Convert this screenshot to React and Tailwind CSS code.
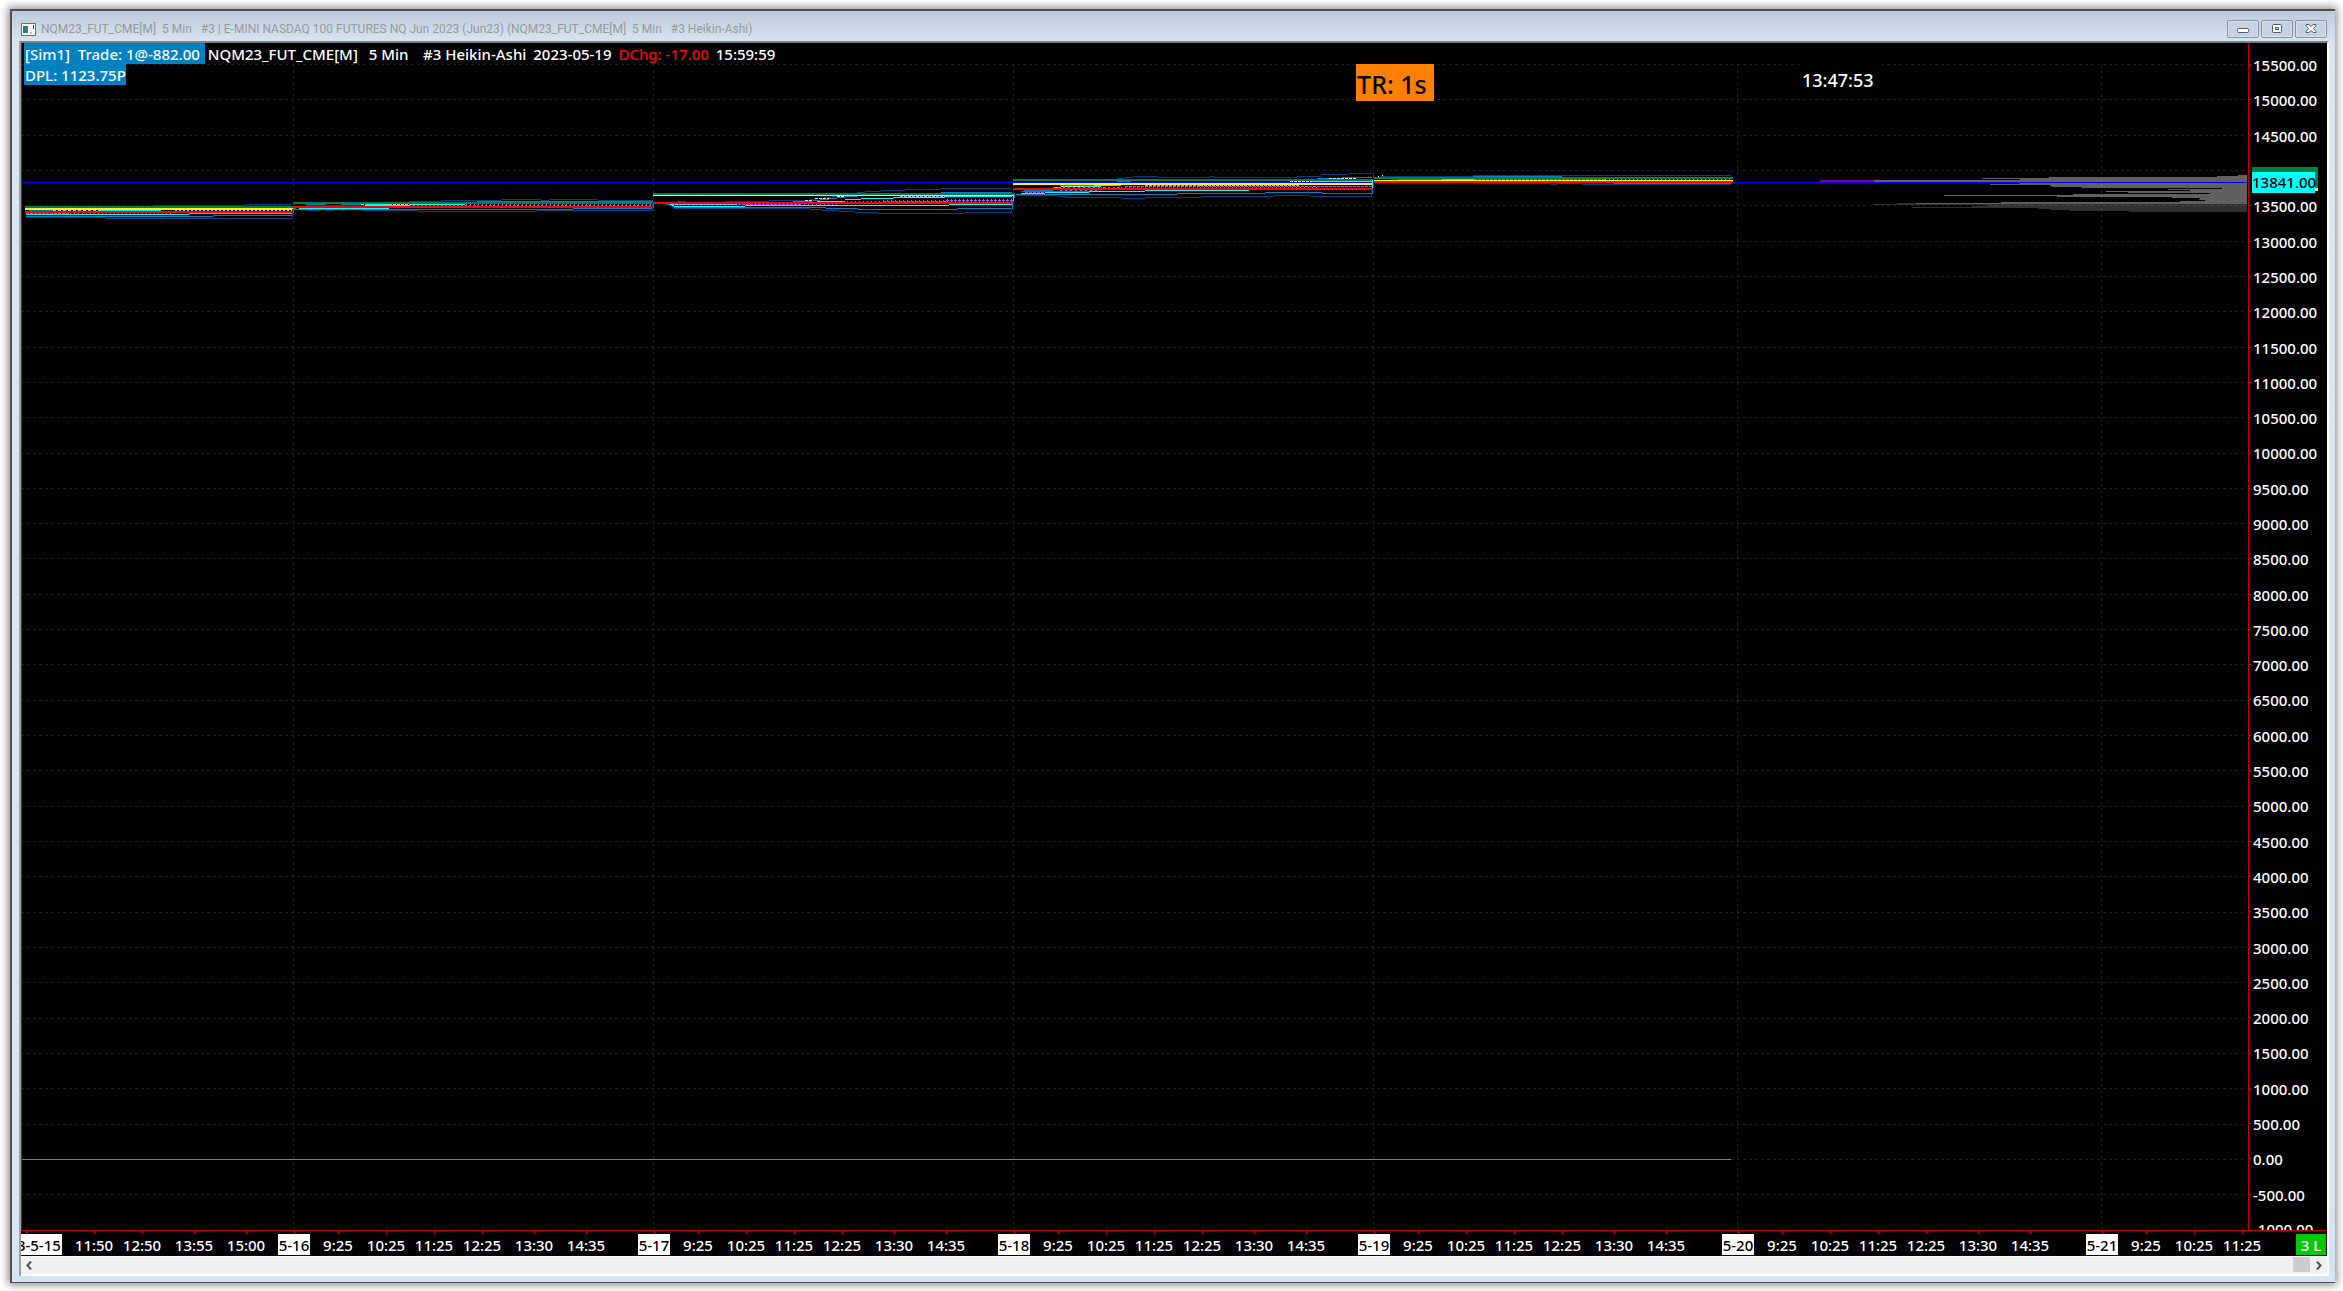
import { useState } from "react";

const GREEN = "#008040";
const YELLOW = "#ffff00";
const RED = "#ff0000";
const NAVY = "#004080";
const BLUE = "#0080c0";
const CYAN = "#00ffff";
const VIOLET = "#a050ff";

// plot area in chart units
const LEFT = 21;
const TOP = 43;
const RIGHT = 2248;
const BOTTOM = 1230;

const prices = [];
for (let p = 15500; p >= -500; p -= 500) prices.push(p);

const days = [293, 653, 1013, 1373, 1737, 2101];

const ticks = [
  [26, "2023-5-15", true], [94, "11:50"], [142, "12:50"], [194, "13:55"], [246, "15:00"],
  [294, "5-16", true], [338, "9:25"], [386, "10:25"], [434, "11:25"], [482, "12:25"], [534, "13:30"], [586, "14:35"],
  [654, "5-17", true], [698, "9:25"], [746, "10:25"], [794, "11:25"], [842, "12:25"], [894, "13:30"], [946, "14:35"],
  [1014, "5-18", true], [1058, "9:25"], [1106, "10:25"], [1154, "11:25"], [1202, "12:25"], [1254, "13:30"], [1306, "14:35"],
  [1374, "5-19", true], [1418, "9:25"], [1466, "10:25"], [1514, "11:25"], [1562, "12:25"], [1614, "13:30"], [1666, "14:35"],
  [1738, "5-20", true], [1782, "9:25"], [1830, "10:25"], [1878, "11:25"], [1926, "12:25"], [1978, "13:30"], [2030, "14:35"],
  [2102, "5-21", true], [2146, "9:25"], [2194, "10:25"], [2242, "11:25"],
];

// stepped one pixel lines: [color, x0, y, x1, y, x2, ...]
const steps = [
  // 5-15
  [NAVY, 153, 205, 245, 204, 292],
  [BLUE, 29, 210, 53],
  [CYAN, 101, 210, 161],
  [CYAN, 26, 214, 189, 213, 292],
  [BLUE, 26, 216, 213, 215, 292],
  [NAVY, 26, 217, 106, 218, 292],
  // 5-16
  [NAVY, 409, 201, 441, 200, 501, 199, 541, 200, 549, 199, 598, 200, 652],
  [BLUE, 477, 201, 652],
  [BLUE, 306, 204, 326],
  [BLUE, 341, 204, 361],
  [NAVY, 306, 205, 365],
  [CYAN, 365, 204, 389],
  [CYAN, 365, 205, 409, 204, 465],
  [CYAN, 299, 208, 389],
  [BLUE, 296, 209, 573, 208, 652],
  [NAVY, 306, 210, 320],
  [NAVY, 326, 210, 333],
  [NAVY, 342, 210, 345],
  [NAVY, 362, 210, 418, 211, 537, 210, 652],
  // 5-17
  [NAVY, 677, 201, 686],
  [NAVY, 725, 201, 769, 200, 810, 199, 817, 198, 824, 197, 832, 196, 845],
  [NAVY, 857, 192, 865, 191, 881, 190, 905, 189, 941, 188, 1012],
  [BLUE, 941, 192, 1012],
  [BLUE, 793, 201, 813, 200, 820, 199, 829, 198, 837, 197, 845, 196, 857],
  [CYAN, 817, 201, 829, 201, 845, 199, 861, 198, 893, 197, 945, 196, 1012],
  [CYAN, 667, 204, 737],
  [CYAN, 671, 205, 674, 206, 745, 205, 949, 204, 1013],
  [BLUE, 660, 203, 666, 204, 670, 205, 672, 206, 674, 207, 826, 208, 858, 209, 957, 208, 1012],
  [NAVY, 674, 208, 810, 209, 822, 210, 838, 211, 854, 212, 878, 213, 965, 212, 1011],
  // 5-18
  [NAVY, 1117, 178, 1125, 177, 1133, 176, 1158, 177, 1209, 176, 1214, 177, 1297, 176, 1321, 174, 1349, 173, 1372],
  [BLUE, 1317, 178, 1342, 177, 1372],
  [BLUE, 1117, 181, 1131],
  [CYAN, 1312, 181, 1373],
  [BLUE, 1060, 185, 1094],
  [CYAN, 1094, 185, 1121],
  [CYAN, 1061, 186, 1101],
  [BLUE, 1024, 190, 1053],
  [CYAN, 1053, 187, 1061],
  [BLUE, 1021, 191, 1089],
  [CYAN, 1021, 193, 1045, 192, 1089, 191, 1145, 190, 1249],
  [BLUE, 1016, 194, 1177, 193, 1265, 192, 1322, 193, 1372],
  [NAVY, 1018, 195, 1058, 196, 1066, 197, 1122, 198, 1145, 197, 1201, 196, 1273, 195, 1310, 196, 1372],
  // 5-19
  [NAVY, 1381, 176, 1473, 175, 1731],
  [BLUE, 1473, 176, 1562],
  [NAVY, 1390, 179, 1418],
  [BLUE, 1398, 179, 1442],
  [CYAN, 1442, 179, 1474],
  [NAVY, 1478, 183, 1550, 184, 1557, 183, 1582, 184, 1731],
  [BLUE, 1614, 183, 1731],
];

// [color, x, y, x2, dash]
const dotted = [
  ["#c0c0c0", 53, 210, 101, "3 2"],
  ["#d0a0ff", 175, 210, 293, "2 2"],
  [VIOLET, 26, 213, 70, "3 1"],
  [VIOLET, 70, 213, 173, "1 3"],
  ["#c0c0c0", 361, 204, 364, "3 0"],
  ["#c0c0c0", 389, 204, 409, "3 1"],
  [VIOLET, 409, 205, 653, "2 2"],
  ["#8080ff", 466, 204, 653, "1 3"],
  ["#e0e0e0", 805, 200, 813, "3 1"],
  ["#e0e0e0", 815, 198, 829, "3 1"],
  ["#e0e0e0", 837, 196, 845, "3 1"],
  ["#80a0ff", 900, 196, 945, "3 1"],
  [VIOLET, 674, 204, 738, "1 3"],
  [VIOLET, 738, 204, 800, "3 1"],
  [VIOLET, 800, 204, 840, "1 3"],
  [VIOLET, 843, 201, 883, "1 3"],
  [VIOLET, 883, 201, 946, "3 1"],
  [VIOLET, 883, 200, 946, "1 3"],
  [VIOLET, 946, 200, 1013, "3 1"],
  [VIOLET, 947, 199, 1013, "1 3"],
  [VIOLET, 947, 201, 1013, "1 3"],
  [VIOLET, 1025, 192, 1045, "3 1"],
  ["#e0e0e0", 1061, 186, 1085, "3 1"],
  [VIOLET, 1053, 187, 1120, "2 3"],
  ["#a0a0ff", 1145, 185, 1200, "3 1"],
  ["#80c0ff", 1200, 185, 1300, "3 1"],
  [VIOLET, 1101, 187, 1200, "1 3"],
  [VIOLET, 1125, 186, 1373, "3 1"],
  [VIOLET, 1200, 187, 1320, "1 3"],
  [VIOLET, 1060, 190, 1100, "2 3"],
  ["#e0e0e0", 1290, 181, 1312, "3 1"],
  ["#e0e0e0", 1329, 178, 1357, "3 1"],
  [VIOLET, 1474, 179, 1605, "3 1"],
  ["#a0a0a0", 1605, 179, 1733, "1 3"],
  ["#e0e0e0", 1378, 176, 1380, "1 1"],
  ["#e0e0e0", 1382, 175, 1383, "1 1"],
];

// thick levels: [color, x, y, width, height]
const levels = [
  [GREEN, 25, 206, 268, 2], [YELLOW, 25, 208, 268, 2], [RED, 25, 211, 268, 2],
  [GREEN, 293, 202, 360, 2], [RED, 293, 206, 360, 2],
  [GREEN, 653, 193, 360, 2], [YELLOW, 653, 195, 360, 1], [RED, 653, 202, 360, 2],
  [GREEN, 1013, 179, 360, 2], [YELLOW, 1013, 183, 360, 2], [RED, 1013, 188, 360, 2],
  [GREEN, 1373, 177, 360, 2], [YELLOW, 1373, 180, 360, 1], [RED, 1373, 181, 360, 2],
];

// moves between sessions
const jumps = [
  [NAVY, 292, 209, 1, 9], [BLUE, 293, 208, 1, 5], [BLUE, 294, 208, 2, 2],
  [NAVY, 652, 200, 1, 11], [BLUE, 653, 204, 1, 4],
  [NAVY, 1011, 208, 1, 5], [BLUE, 1012, 200, 1, 9], [CYAN, 1013, 194, 1, 7], [BLUE, 1014, 193, 1, 5],
  [NAVY, 1371, 190, 1, 7], [BLUE, 1372, 184, 1, 10], [CYAN, 1372, 180, 1, 8], [NAVY, 1373, 174, 1, 11],
];

// volume profile rows, starting at y 175
const profile = [
  2238, 2217, 2049, 1983, 2020, 1874, 1874, 2020, 2020, 1990, 2050, 2052, 2082, 2222, 2168, 2190, 2106,
  2128, 2210, 2073, 1944, 2057, 2172, 2200, 2199, 2205, 2180, 2001, 1916,
];
const profileLow = [1873, 1987, 1972, 1912, 2038, 2050, 2070, 2129];

function Steps({ line }) {
  const [color, ...pts] = line;
  const out = [];
  for (let i = 0; i + 2 < pts.length; i += 2) {
    out.push(<rect key={i} x={pts[i]} y={pts[i + 1]} width={pts[i + 2] - pts[i]} height="1" fill={color} />);
  }
  return <g>{out}</g>;
}

function Bar({ bar }) {
  const [color, x, y, w, h] = bar;
  return <rect x={x} y={y} width={w} height={h} fill={color} />;
}

function Plot() {
  return (
    <svg
      className="absolute inset-0 w-full h-full"
      viewBox={`${LEFT} ${TOP} ${RIGHT - LEFT} ${BOTTOM - TOP}`}
      preserveAspectRatio="none"
      shapeRendering="crispEdges"
    >
      {profile.map((x, i) => (
        <rect key={i} x={x} y={175 + i} width={2247 - x} height="1" fill="#606060" />
      ))}
      <rect x="1897" y="203" width="19" height="1" fill="#303030" />
      {profileLow.map((x, i) => (
        <rect key={i} x={x} y={204 + i} width={2247 - x} height="1" fill="#303030" />
      ))}

      <g stroke="#ffffff" strokeOpacity="0.11" strokeDasharray="3 3">
        {prices.map((p, i) => {
          const y = Math.round(64 + i * 35.32) + 0.5;
          return <line key={p} x1={LEFT} x2="2247" y1={y} y2={y} />;
        })}
        {days.map(x => <line key={x} x1={x + 0.5} x2={x + 0.5} y1="64" y2={BOTTOM} />)}
      </g>

      <rect x={LEFT} y="1159" width="1710" height="1" fill="#808080" />
      <rect x="1820" y="180" width="54" height="2" fill="#800080" />
      <rect x={LEFT} y="182" width={RIGHT - LEFT} height="1" fill="#0000ff" />

      {steps.map((l, i) => <Steps key={i} line={l} />)}
      {dotted.map(([color, x, y, x2, dash], i) => (
        <line key={i} x1={x} x2={x2} y1={y + 0.5} y2={y + 0.5} stroke={color} strokeDasharray={dash} />
      ))}
      {levels.map((b, i) => <Bar key={i} bar={b} />)}
      {jumps.map((b, i) => <Bar key={i} bar={b} />)}
      <rect x={LEFT} y={TOP} width="1" height={BOTTOM - TOP} fill="#c00000" />
    </svg>
  );
}

function PriceAxis() {
  return (
    <div className="relative w-[79px] shrink-0 flex flex-col pt-[5px] border-l border-[#c00000] overflow-hidden">
      {prices.map(p => (
        <div key={p} className="flex-1 min-h-0 flex items-center">
          <span className="w-[2px] h-px mb-[2px] mr-[2px] bg-[#c00000]" />
          <span className="leading-none">{p.toFixed(2)}</span>
        </div>
      ))}
      <div className="h-[17px] pl-1 pt-[9px] leading-none">-1000.00</div>

      <div className="absolute left-[3px] top-[124px] w-[66px] h-[24px] bg-[#008040] border-b-3 border-[#ffff00]" />
      <div className="absolute left-[3px] top-[128px] w-[63px] h-[22px] border-t border-[#ff0000] bg-[#00ffff] text-black leading-[21px]">
        13841.00
      </div>
    </div>
  );
}

function TimeAxis() {
  return (
    <div className="flex h-[26px] border-t border-[#c00000] overflow-hidden">
      <div className="flex-1 flex min-w-0">
        <div className="basis-0" style={{ flexGrow: ticks[0][0] - LEFT }} />
        {ticks.map(([x, label, isDay], i) => {
          const next = i + 1 < ticks.length ? ticks[i + 1][0] : RIGHT;
          return (
            <div key={x} className="basis-0 min-w-0" style={{ flexGrow: next - x }}>
              <div className="w-px h-[3px] bg-[#c00000]" />
              <div className="w-0 flex justify-center">
                <span className={isDay
                  ? "shrink-0 px-px pt-[2px] whitespace-nowrap leading-[19px] bg-white text-black"
                  : "shrink-0 pt-[2px] whitespace-nowrap leading-[19px]"}>
                  {label}
                </span>
              </div>
            </div>
          );
        })}
      </div>
      <div className="w-[79px] shrink-0 flex justify-end pt-[3px] pr-px">
        <span className="w-[30px] h-[21px] pt-[2px] text-center leading-[19px] bg-[#00c800]">3 L</span>
      </div>
    </div>
  );
}

function CaptionButton({ label, children }) {
  return (
    <button
      aria-label={label}
      className="w-8 h-[18px] flex items-center justify-center rounded-xs border border-[#8492ae] bg-[#c5d2e0] shadow-[inset_0_0_0_1px_#d6e0ea]"
    >
      <svg width="12" height="10" viewBox="0 0 12 10">{children}</svg>
    </button>
  );
}

function TitleBar() {
  return (
    <div className="h-[30px] flex items-center pt-[6px] pl-[9px] pr-2 bg-linear-to-b from-[#bccad9] to-[#d7e4f2]">
      <svg width="15" height="13" viewBox="0 0 15 13" className="shrink-0" shapeRendering="crispEdges">
        <rect x="0.5" y="0.5" width="14" height="12" fill="#fff" stroke="#707070" />
        <rect x="2" y="3" width="5" height="7" fill="#2f8f6a" />
        <rect x="2" y="3" width="2" height="7" fill="#3a6a9a" />
        <rect x="9" y="9" width="2" height="2" fill="#c0c0c0" />
        <rect x="12" y="2" width="1" height="4" fill="#404060" />
      </svg>
      <span className="ml-[5px] flex-1 whitespace-pre font-['Roboto','Noto_Sans',sans-serif] text-[12px] text-[#999]">
        {"NQM23_FUT_CME[M]  5 Min   #3 | E-MINI NASDAQ 100 FUTURES NQ Jun 2023 (Jun23) (NQM23_FUT_CME[M]  5 Min   #3 Heikin-Ashi)"}
      </span>
      <div className="flex gap-[2px]">
        <CaptionButton label="Minimize">
          <rect x="0.5" y="4.5" width="11" height="4" rx="1" fill="#fff" stroke="#555a6c" />
        </CaptionButton>
        <CaptionButton label="Restore">
          <rect x="1.5" y="0.5" width="9" height="8" rx="1" fill="#fff" stroke="#555a6c" />
          <rect x="4.5" y="3.5" width="3" height="2" fill="#c5d2e0" stroke="#555a6c" />
        </CaptionButton>
        <CaptionButton label="Close">
          <path d="M1 .5h3l2 2 2-2h3v1L8.5 4.500 11 7.500v1H8l-2-2-2 2H1v-1L3.500 4.500 1 1.500z" fill="#fff" stroke="#555a6c" />
        </CaptionButton>
      </div>
    </div>
  );
}

function ScrollBar() {
  return (
    <div className="h-[20px] flex items-center bg-[#f0f0f0] border-t border-b-2 border-white">
      <button aria-label="Scroll left" className="w-[15px] h-full flex items-center justify-center">
        <svg width="6" height="9" viewBox="0 0 6 9"><path d="M5 .5 1.500 4.500 5 8.500" fill="none" stroke="#505050" strokeWidth="2" /></svg>
      </button>
      <div className="flex-1" />
      <div className="w-[17px] h-[15px] mb-[2px] bg-[#cdcdcd]" />
      <button aria-label="Scroll right" className="w-[17px] h-full flex items-center justify-center">
        <svg width="6" height="9" viewBox="0 0 6 9"><path d="M1 .5 4.500 4.500 1 8.500" fill="none" stroke="#505050" strokeWidth="2" /></svg>
      </button>
    </div>
  );
}

export default function App() {
  const [clock] = useState("13:47:53");

  return (
    <div className="h-screen flex flex-col pt-[9px] pl-[10px] pr-2 pb-2 bg-white overflow-hidden font-['Noto_Sans','Open_Sans',sans-serif]">
      <div className="flex-1 min-h-0 flex flex-col bg-[#d7e4f2] border-t-2 border-l-2 border-b border-[#505050] shadow-[0_0_8px_2px_rgba(0,0,0,0.45)]">
        <TitleBar />
        <div className="flex-1 min-h-0 flex flex-col ml-[7px] mr-[6px] mb-[6px] border-t-2 border-l-2 border-r-2 border-t-[#7c8080] border-l-[#a0a0a0] border-r-white bg-black text-white text-[15px] font-medium">
          <div className="flex-1 min-h-0 flex">
            <div className="relative flex-1 min-w-0">
              <Plot />
              <div className="relative pl-[3px] leading-[19px] whitespace-pre">
                <div className="flex items-baseline gap-[3px]">
                  <span className="px-px pt-[2px] bg-[#0080c0]">{"[Sim1]  Trade: 1@-882.00 "}</span>
                  <span>{"NQM23_FUT_CME[M]  "}</span>
                  <span>{"5 Min   "}</span>
                  <span>{"#3 Heikin-Ashi "}</span>
                  <span>{"2023-05-19 "}</span>
                  <span className="text-[#ff0000]">{"DChg: -17.00 "}</span>
                  <span>15:59:59</span>
                </div>
                <div className="flex">
                  <span className="pl-px pt-[2px] bg-[#0080c0]">DPL: 1123.75P</span>
                </div>
              </div>
              <div className="absolute left-[59.95%] top-[21px] w-[78px] h-[37px] pl-px bg-[#ff8000] text-black text-[25px] leading-10 whitespace-nowrap">
                TR: 1s
              </div>
              <div className="absolute left-[79.93%] top-[21px] w-[76px] px-px bg-black text-[18px] leading-8">{clock}</div>
            </div>
            <PriceAxis />
          </div>
          <TimeAxis />
          <ScrollBar />
        </div>
      </div>
    </div>
  );
}
